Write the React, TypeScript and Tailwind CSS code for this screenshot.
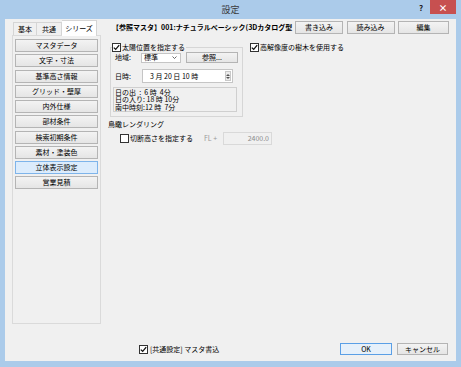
import React from 'react';
import clsx from 'clsx';

const Check = ({ checked = false }: { checked?: boolean }) => (
  <span className="w-[9px] h-[9px] border border-[#333] bg-white flex items-center justify-center shrink-0">
    {checked && (
      <svg width="7" height="7" viewBox="0 0 7 7">
        <path d="M0.8 3.6 L2.7 5.4 L6.2 1.2" stroke="#111" strokeWidth="1.3" fill="none" />
      </svg>
    )}
  </span>
);

const Btn = ({ children, className, active }: { children: React.ReactNode; className?: string; active?: boolean }) => (
  <div
    className={clsx(
      'flex items-center justify-center border leading-none whitespace-nowrap',
      active ? 'border-[#7eb4ea] bg-[#dcecfc]' : 'border-[#b4b4b4] bg-gradient-to-b from-[#f3f3f3] to-[#e5e5e5]',
      className
    )}
  >
    {children}
  </div>
);

const menu = [
  'マスタデータ',
  '文字・寸法',
  '基準高さ情報',
  'グリッド・壁厚',
  '内外仕様',
  '部材条件',
  '検索初期条件',
  '素材・塗装色',
  '立体表示設定',
  '営業見積',
];

export default function App() {
  return (
    <div className="w-[461px] h-[367px] bg-[#abcbea] flex flex-col overflow-hidden text-[7px] text-black font-['Noto_Sans_CJK_JP','Noto_Sans',sans-serif]">
      {/* Title bar */}
      <div className="h-[19px] flex items-start shrink-0">
        <div className="w-[45px]" />
        <div className="flex-1 text-center text-[9px] leading-[20px] text-[#3a3a3a]">設定</div>
        <div className="w-[45px] flex items-start">
          <div className="w-[10px] text-center font-bold text-[8px] leading-[15px] text-[#222]">?</div>
          <div className="ml-[4px] w-[26px] h-[14px] bg-[#c75050] flex items-center justify-center text-white text-[9px] font-bold leading-none">
            ×
          </div>
        </div>
      </div>

      {/* Client */}
      <div className="flex-1 mx-[5px] mb-[6px] bg-[#f0f0f0] flex flex-col">
        <div className="flex-1 flex items-start">
          {/* Left tab control */}
          <div className="ml-[7px] mt-[1px] w-[89px] flex flex-col">
            <div className="h-[15px] flex items-end pl-[1px]">
              <div className="w-[24px] h-[13px] border border-[#d5d5d5] border-b-0 bg-[#f0f0f0] flex items-center justify-center">基本</div>
              <div className="w-[25px] h-[13px] border border-[#d5d5d5] border-b-0 border-l-0 bg-[#f0f0f0] flex items-center justify-center">共通</div>
              <div className="w-[35px] h-[16px] border border-[#d5d5d5] border-b-0 border-l-0 bg-white flex items-center justify-center relative z-10 -mb-[1px]">
                シリーズ
              </div>
            </div>
            <div className="h-[289px] border border-[#dadada] pt-[3px] px-[2px] flex flex-col gap-[2.25px]">
              {menu.map((m) => (
                <Btn key={m} className="h-[13px]" active={m === '立体表示設定'}>
                  {m}
                </Btn>
              ))}
            </div>
          </div>

          {/* Right area */}
          <div className="flex-1 ml-[5px] mr-[7px] flex flex-col">
            <div className="mt-[2px] h-[13px] flex items-center">
              <div className="flex-1 overflow-hidden whitespace-nowrap font-bold pl-[6px] leading-[13px]">
                【参照マスタ】001:ナチュラルベーシック(3Dカタログ型
              </div>
              <div className="flex gap-[3.5px] ml-[2px]">
                <Btn className="w-[48px] h-[13px]">書き込み</Btn>
                <Btn className="w-[48px] h-[13px]">読み込み</Btn>
                <Btn className="w-[51px] h-[13px]">編集</Btn>
              </div>
            </div>

            <div className="mt-[9px] flex items-start">
              <fieldset className="ml-[4px] w-[133px] border border-[#d6d6d6]">
                <legend className="ml-[1px] flex items-center gap-[1px] bg-[#f0f0f0] pr-[1px] leading-[9px]">
                  <Check checked />
                  <span>太陽位置を指定する</span>
                </legend>
                <div className="pl-[4px] pb-[4px]">
                  <div className="flex items-center h-[11px]">
                    <span className="w-[26px]">地域:</span>
                    <div className="w-[40px] h-[10px] bg-white border border-[#c5c5c5] flex items-center justify-between pl-[2px] pr-[3px]">
                      <span>標準</span>
                      <svg width="5" height="3" viewBox="0 0 5 3">
                        <path d="M0.5 0.5 L2.5 2.5 L4.5 0.5" stroke="#444" strokeWidth="0.8" fill="none" />
                      </svg>
                    </div>
                    <Btn className="ml-[5px] w-[52px] h-[11px]">参照...</Btn>
                  </div>
                  <div className="mt-[6px] flex items-center h-[14px]">
                    <span className="w-[27px]">日時:</span>
                    <div className="w-[91px] h-[14px] bg-white border border-[#c5c5c5] flex items-center">
                      <span className="flex-1 pl-[7px] whitespace-pre">3 月 20 日 10 時</span>
                      <div className="w-[6px] h-[10px] mr-[1px] border border-[#c8c8c8] bg-[#ececec] flex flex-col items-center justify-center gap-[1px]">
                        <svg width="4" height="2" viewBox="0 0 4 2">
                          <path d="M0 2 L2 0 L4 2 Z" fill="#555" />
                        </svg>
                        <svg width="4" height="2" viewBox="0 0 4 2">
                          <path d="M0 0 L2 2 L4 0 Z" fill="#555" />
                        </svg>
                      </div>
                    </div>
                  </div>
                  <div className="mt-[4px] -ml-[2px] w-[124px] h-[25px] border border-[#cfcfcf] pl-[1px] pt-[0.5px] leading-[7.5px] whitespace-pre">
                    <div>日の出  :  6 時  4分</div>
                    <div>日の入り: 18 時 10分</div>
                    <div>南中時刻:12 時  7分</div>
                  </div>
                </div>
              </fieldset>
              <div className="ml-[7px] flex items-center gap-[1px] leading-[9px]">
                <Check checked />
                <span>高解像度の樹木を使用する</span>
              </div>
            </div>

            <div className="mt-[3px] ml-[2px] leading-[9px]">鳥瞰レンダリング</div>
            <div className="mt-[3px] ml-[14px] h-[13px] flex items-center">
              <div className="w-[84px] flex items-center gap-[1px]">
                <Check />
                <span>切断高さを指定する</span>
              </div>
              <span className="w-[19px] text-[#9a9a9a]">FL +</span>
              <div className="w-[49px] h-[13px] border border-[#d9d9d9] bg-[#f0f0f0] flex items-center justify-end pr-[2px] text-[#8a8a8a]">
                2400.0
              </div>
            </div>
          </div>
        </div>

        {/* Bottom row */}
        <div className="h-[12px] mb-[6px] flex items-center">
          <div className="flex-1 ml-[134px] flex items-center gap-[2px]">
            <Check checked />
            <span>[共通設定] マスタ書込</span>
          </div>
          <Btn className="w-[52px] h-[12px] !border-[#5a9fe6] !bg-none bg-[#e6f0fa]">OK</Btn>
          <Btn className="ml-[5px] mr-[8px] w-[51px] h-[12px]">キャンセル</Btn>
        </div>
      </div>
    </div>
  );
}
